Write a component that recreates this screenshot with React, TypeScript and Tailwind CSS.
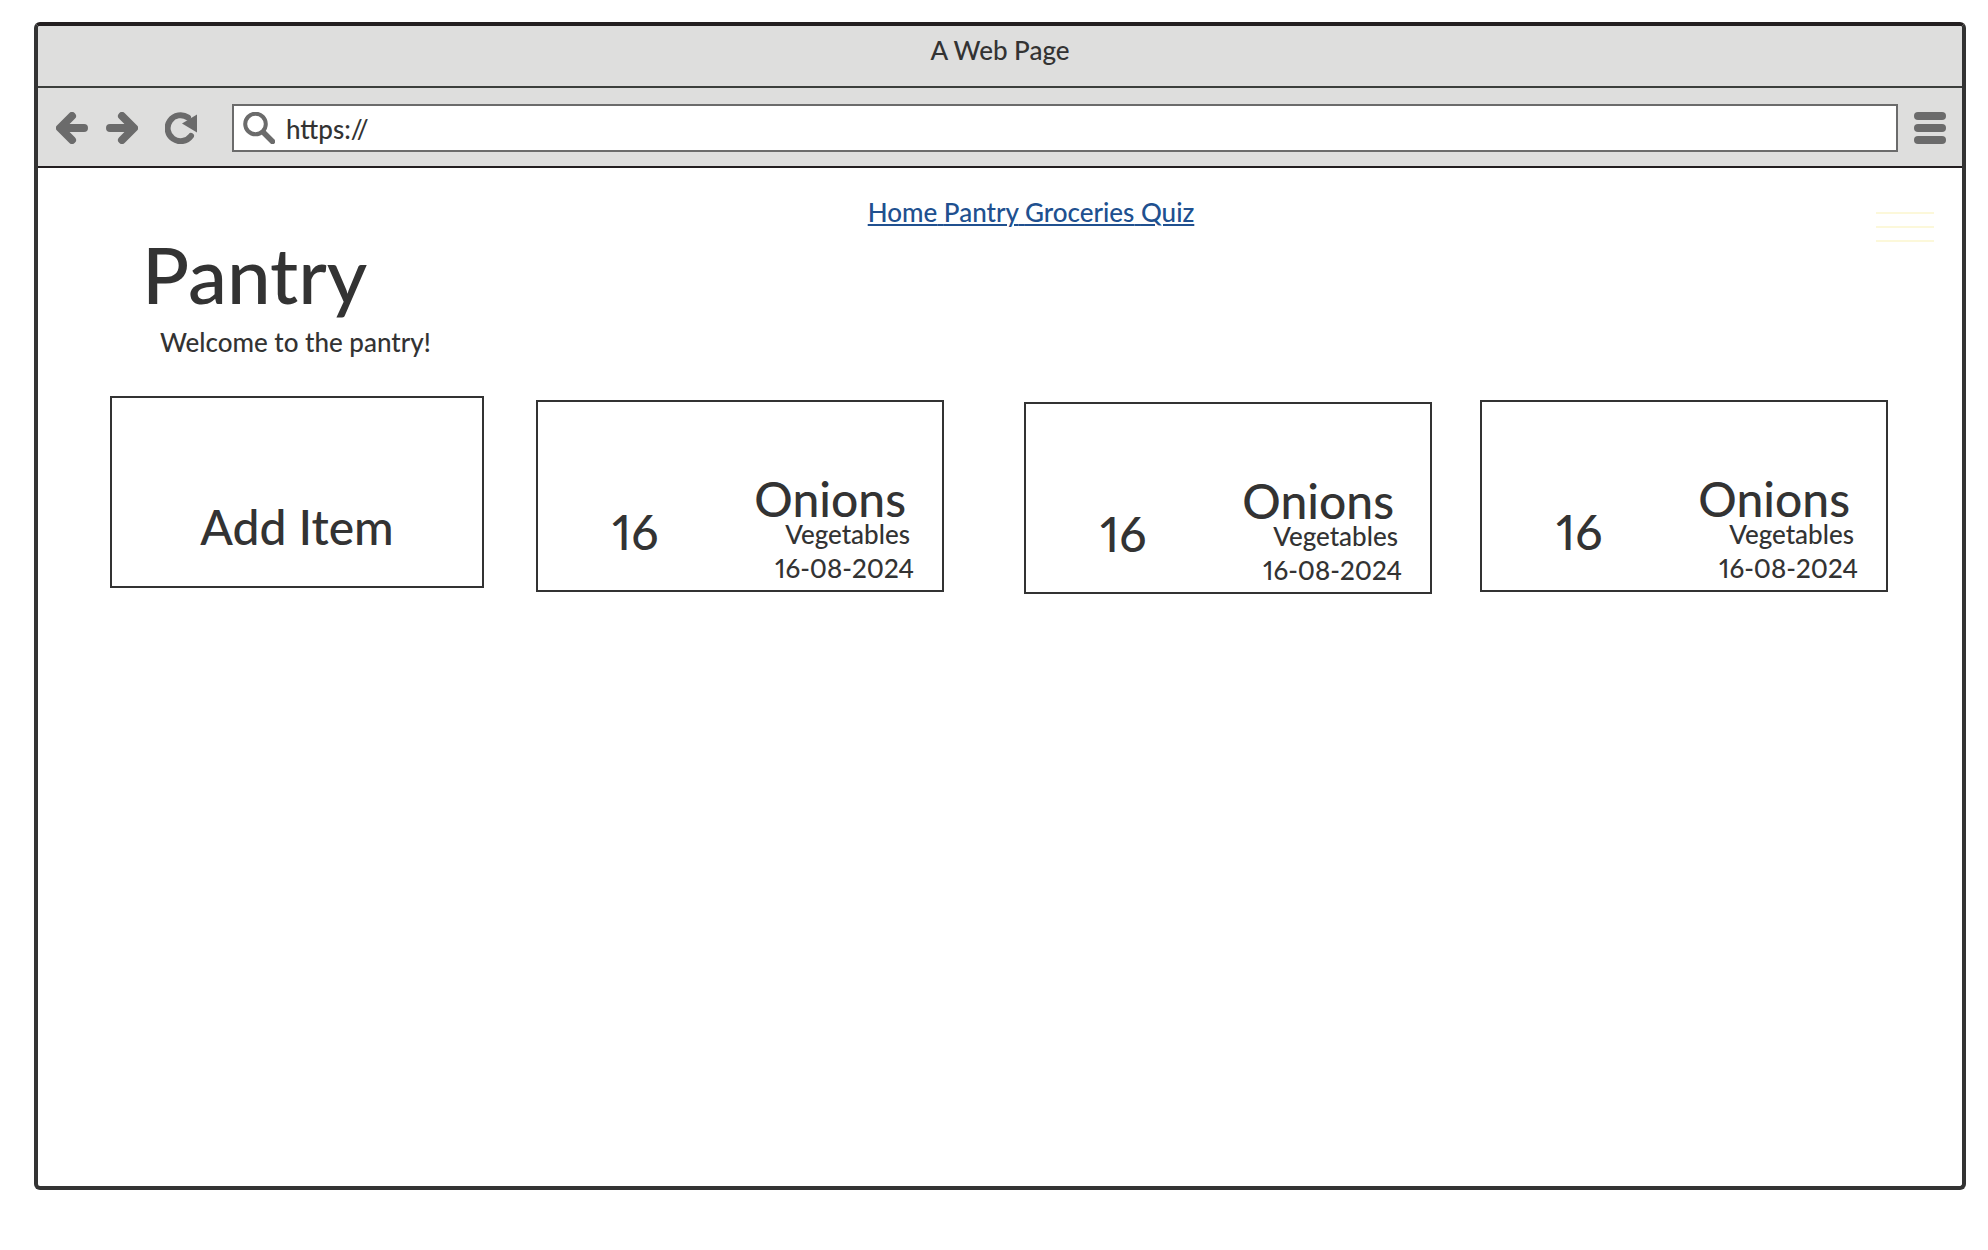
const stock = [
  { quantity: 16, name: "Onions", category: "Vegetables", date: "16-08-2024", place: "mt-1 ml-[52px]" },
  { quantity: 16, name: "Onions", category: "Vegetables", date: "16-08-2024", place: "mt-1.5 ml-20" },
  { quantity: 16, name: "Onions", category: "Vegetables", date: "16-08-2024", place: "mt-1 ml-12" },
];

const links = ["Home", "Pantry", "Groceries", "Quiz"];

function ArrowIcon({ className = "" }: { className?: string }) {
  return (
    <svg viewBox="0 0 32 32" className={`size-8 ${className}`} fill="none" stroke="currentColor" strokeWidth="8" strokeLinecap="round" strokeLinejoin="round" aria-hidden="true">
      <path d="M28 16H6M16 4L4 16L16 28" />
    </svg>
  );
}

function ReloadIcon() {
  return (
    <svg viewBox="0 0 32 32" className="size-8" aria-hidden="true">
      <path d="M26 24A13 13 0 1 1 23 5.500" fill="none" stroke="currentColor" strokeWidth="6" strokeLinecap="round" />
      <path d="M32 2.500V20.500L17 11.500Z" fill="currentColor" />
    </svg>
  );
}

function SearchIcon() {
  return (
    <svg viewBox="0 0 32 32" className="size-8 shrink-0" fill="none" stroke="currentColor" aria-hidden="true">
      <circle cx="12.500" cy="12" r="10.300" strokeWidth="4" />
      <path d="M20.500 20.500L29.500 29.500" strokeWidth="5.500" strokeLinecap="round" />
    </svg>
  );
}

function BrowserBar() {
  return (
    <header className="bg-[#dededd]">
      <div className="h-[62px] border-b-2 border-[#3c3f3c] pt-2 text-center">A Web Page</div>
      <div className="flex h-20 items-center border-b-2 border-[#231f20] pt-0.5 pr-4 pl-[18px] text-[#6b6b6b]">
        <button type="button" aria-label="Back"><ArrowIcon /></button>
        <button type="button" aria-label="Forward" className="ml-[18px]"><ArrowIcon className="rotate-180" /></button>
        <button type="button" aria-label="Reload" className="ml-[27px]"><ReloadIcon /></button>
        <label className="ml-[35px] flex h-12 flex-1 items-center border-2 border-[#6b6b6b] bg-white pl-[9px]">
          <SearchIcon />
          <input type="text" aria-label="Address" defaultValue="https://" className="ml-[11px] w-full bg-transparent pt-0.5 text-[#333] outline-none" />
        </label>
        <button type="button" aria-label="Browser menu" className="ml-4 flex w-8 flex-col gap-1">
          <span className="h-2 w-full rounded-full bg-current" />
          <span className="h-2 w-full rounded-full bg-current" />
          <span className="h-2 w-full rounded-full bg-current" />
        </button>
      </div>
    </header>
  );
}

export default function App() {
  return (
    <div className="flex min-h-screen flex-col bg-white pt-[22px] pr-[22px] pb-[60px] pl-[34px] font-['Lato',sans-serif] text-[26px] leading-8 font-medium text-[#333] proportional-nums">
      <div className="flex flex-1 flex-col overflow-hidden rounded-md border-4 border-[#333] border-t-[#231f20]">
        <BrowserBar />
        <main>
          <div className="flex items-start pt-7 pr-7">
            <nav className="flex-1 pl-[148px] text-center text-[#20508f] underline decoration-2 underline-offset-2">
              {links.map((label, i) => (
                <span key={label}>{i > 0 && " "}<a href={`#${label.toLowerCase()}`}>{label}</a></span>
              ))}
            </nav>
            <button type="button" aria-label="Menu" className="mt-4 -mb-4 flex w-[58px] flex-col gap-3">
              <span className="h-0.5 w-full bg-[#fcf8da]" />
              <span className="h-0.5 w-full bg-[#fcf8da]" />
              <span className="h-0.5 w-full bg-[#fcf8da]" />
            </button>
          </div>
          <h1 className="mt-1.5 ml-[104px] text-[78px] leading-[80px]">Pantry</h1>
          <p className="mt-3 ml-[122px]">Welcome to the pantry!</p>
          <section className="mt-[38px] flex items-start pr-[74px] pl-[72px]">
            <button type="button" className="flex h-48 flex-[374_374_374px] items-end justify-center border-2 border-[#333] pb-[35px] text-[48px] leading-[48px]">
              Add Item
            </button>
            {stock.map((item) => (
              <article key={item.place} className={`flex h-48 flex-[408_408_408px] items-end justify-between border-2 border-[#333] pr-7 pb-2 pl-[74px] ${item.place}`}>
                <div className="pb-[26px] text-[48px] leading-[48px]">{item.quantity}</div>
                <div className="flex flex-col items-end leading-7">
                  <h2 className="mr-2 text-[48px] leading-[42px]">{item.name}</h2>
                  <p className="mr-1">{item.category}</p>
                  <p className="mt-1.5">{item.date}</p>
                </div>
              </article>
            ))}
          </section>
        </main>
      </div>
    </div>
  );
}
